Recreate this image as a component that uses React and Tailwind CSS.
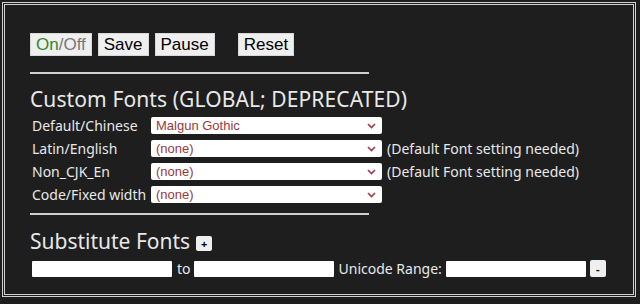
import React from 'react';

const btn = "h-[23px] px-[5px] bg-[#efefef] border border-[#d8d8d8] text-[17px] leading-none text-black font-['Liberation_Sans',Arial,sans-serif]";
const sel = "w-[231px] h-[17px] bg-white rounded-[2px] flex items-center justify-between pl-[5px] pr-[6px] text-[13px] text-[#9a3a3a] font-['Liberation_Sans',Arial,sans-serif]";

const Chevron = () => (
  <svg width="9" height="6" viewBox="0 0 9 6">
    <path d="M1 1l3.5 3.5L8 1" fill="none" stroke="#a33a4a" strokeWidth="1.6" />
  </svg>
);

const rows = [
  ['Default/Chinese', 'Malgun Gothic', false],
  ['Latin/English', '(none)', true],
  ['Non_CJK_En', '(none)', true],
  ['Code/Fixed width', '(none)', false],
];

export default function App() {
  return (
    <div className="w-[640px] h-[304px] bg-[#1e1e1e] pt-[2px] pl-[2px] font-['Noto_Sans',sans-serif] text-[#e8e8e8]">
      <div className="w-[634px] h-[295px] border-[3px] border-double border-[#d0d0d0] pl-[25px] pt-[28px]">
        <div className="flex items-center">
          <button className={btn}>
            <span className="text-[#2e8b2e]">On</span><span className="text-[#777]">/Off</span>
          </button>
          <button className={btn + " ml-[6px]"}>Save</button>
          <button className={btn + " ml-[6px]"}>Pause</button>
          <button className={btn + " ml-[23px]"}>Reset</button>
        </div>
        <div className="w-[339px] h-[2px] bg-[#cfcfcf] mt-[16px]" />
        <div className="text-[21px] leading-none mt-[15px] tracking-[0.1px]">Custom Fonts (GLOBAL; DEPRECATED)</div>
        <div className="mt-[7px] flex flex-col gap-[6px] pl-[2px]">
          {rows.map(([label, val, note]) => (
            <div key={label} className="flex items-center h-[17px]">
              <div className="w-[119px] text-[14px] leading-none whitespace-nowrap">{label}</div>
              <div className={sel}>
                <span>{val}</span>
                <Chevron />
              </div>
              {note && <span className="ml-[5px] text-[14px] leading-none">(Default Font setting needed)</span>}
            </div>
          ))}
        </div>
        <div className="w-[339px] h-[2px] bg-[#cfcfcf] mt-[10px]" />
        <div className="flex items-center mt-[16px]">
          <span className="text-[21px] leading-none">Substitute Fonts</span>
          <button className="ml-[6px] w-[16px] h-[15px] bg-[#efefef] rounded-[2px] text-black text-[11px] leading-none font-bold flex items-center justify-center mt-[4px]">+</button>
        </div>
        <div className="flex items-center mt-[8px] pl-[2px] text-[14px]">
          <div className="w-[140px] h-[16px] bg-white rounded-[1px]" />
          <span className="ml-[5px] mr-[3px] leading-none">to</span>
          <div className="w-[140px] h-[16px] bg-white rounded-[1px]" />
          <span className="ml-[5px] mr-[4px] leading-none">Unicode Range:</span>
          <div className="w-[140px] h-[16px] bg-white rounded-[1px]" />
          <button className="ml-[4px] w-[16px] h-[17px] bg-[#efefef] rounded-[2px] text-black text-[11px] leading-none font-bold flex items-center justify-center">-</button>
        </div>
      </div>
    </div>
  );
}
